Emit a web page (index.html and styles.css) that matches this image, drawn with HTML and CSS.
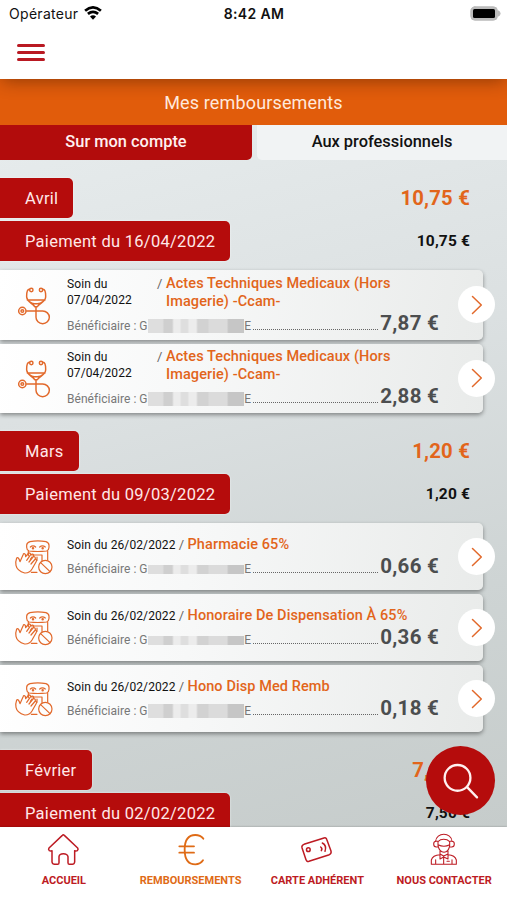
FILE: index.html
```html
<!DOCTYPE html>
<html lang="fr">
<head>
<meta charset="utf-8">
<meta name="viewport" content="width=device-width, initial-scale=1">
<title>Mes remboursements</title>
<link rel="stylesheet" href="styles.css">
</head>
<body>
<svg class="sprite" aria-hidden="true">
  <symbol id="stethoscope" viewBox="42 352 120 132">
    <circle cx="94" cy="373" r="5"/><circle cx="123" cy="373" r="5"/>
    <path d="M88 371C79 372 80 384 80 394C81 410 97 411 104 423H112C120 411 136 410 137 394C137 384 138 372 129 371M82 403H135M87 407Q98 415 104 414H112Q121 414 130 407M108 423V455A20 19 0 1 0 128 436H80"/>
    <circle cx="67" cy="436" r="11"/><circle cx="67" cy="436" r="4"/>
  </symbol>
  <symbol id="pharmacy" viewBox="42 65 120 120">
    <path d="M80 90Q80 82 90 79Q113 74 138 79Q147 82 147 90V96Q147 104 140 107Q113 110 87 107Q80 104 80 96Z"/>
    <path d="M91 95Q99 88 107 95M119 95Q127 88 136 95M85 108V121M143 108V134M95 119H126V136M111 125V135M91 132L96 125"/>
    <circle cx="99" cy="99" r="2"/><circle cx="128" cy="99" r="2"/>
    <path d="M74 173Q51 166 48 150Q46 139 50 128Q56 124 60 139L69 119Q71 112 76 117L77 124L86 113Q91 112 92 118L80 135M92 118L98 116Q103 119 100 124L87 140M100 124Q107 123 106 131L93 146M106 131Q112 133 108 140L96 161Q88 174 74 173M111 171H94"/>
    <circle cx="136" cy="155" r="20"/><path d="M122 142L150 169"/>
  </symbol>
  <symbol id="chevron" viewBox="0 0 12 20"><path d="M1.5 1.5L10.3 10L1.5 18.5"/></symbol>
</svg>
<div class="app">
  <header class="top">
    <div class="status">
      <div class="carrier"><span>Opérateur</span>
        <svg class="wifi" viewBox="0 0 18 14"><path d="M1.1 4.8Q9 -2 16.9 4.8M3.9 7.9Q9 3.7 14.1 7.9"/><path class="solid" d="M6 10.6Q9 8.1 12 10.6L9 13.8Z"/></svg>
      </div>
      <span class="clock">8:42 AM</span>
      <svg class="battery" viewBox="0 0 31 15"><rect x=".8" y=".8" width="26.6" height="13.4" rx="4"/><path d="M28.8 5Q31.6 7.5 28.8 10Z"/><rect class="charge" x="3" y="3" width="22" height="9" rx="1.5"/></svg>
    </div>
    <div class="menu"><i></i><i></i><i></i></div>
  </header>
  <main class="content">
    <h1 class="title">Mes remboursements</h1>
    <div class="tabs"><div class="tab active">Sur mon compte</div><div class="tab">Aux professionnels</div></div>

    <section class="month">
      <div class="line"><span class="tag">Avril</span><b class="month-total">10,75 €</b></div>
      <div class="line"><span class="tag">Paiement du 16/04/2022</span><b class="pay-total">10,75 €</b></div>
      <div class="cards">
        <article class="card tall">
          <svg class="icon"><use href="#stethoscope"/></svg>
          <div class="body">
            <div class="care"><span class="date">Soin du 07/04/2022</span><span class="slash">/</span><span class="act">Actes Techniques Medicaux (Hors Imagerie) -Ccam-</span></div>
            <div class="who"><span class="name">Bénéficiaire : G<i class="mask"></i>E</span><i class="dots"></i><b>7,87 €</b></div>
          </div>
          <div class="go"><svg><use href="#chevron"/></svg></div>
        </article>
        <article class="card tall">
          <svg class="icon"><use href="#stethoscope"/></svg>
          <div class="body">
            <div class="care"><span class="date">Soin du 07/04/2022</span><span class="slash">/</span><span class="act">Actes Techniques Medicaux (Hors Imagerie) -Ccam-</span></div>
            <div class="who"><span class="name">Bénéficiaire : G<i class="mask"></i>E</span><i class="dots"></i><b>2,88 €</b></div>
          </div>
          <div class="go"><svg><use href="#chevron"/></svg></div>
        </article>
      </div>
    </section>

    <section class="month">
      <div class="line"><span class="tag">Mars</span><b class="month-total">1,20 €</b></div>
      <div class="line"><span class="tag">Paiement du 09/03/2022</span><b class="pay-total">1,20 €</b></div>
      <div class="cards">
        <article class="card">
          <svg class="icon"><use href="#pharmacy"/></svg>
          <div class="body">
            <div class="care"><span class="date">Soin du 26/02/2022</span><span class="slash">/</span><span class="act">Pharmacie 65%</span></div>
            <div class="who"><span class="name">Bénéficiaire : G<i class="mask short"></i>E</span><i class="dots"></i><b>0,66 €</b></div>
          </div>
          <div class="go"><svg><use href="#chevron"/></svg></div>
        </article>
        <article class="card">
          <svg class="icon"><use href="#pharmacy"/></svg>
          <div class="body">
            <div class="care"><span class="date">Soin du 26/02/2022</span><span class="slash">/</span><span class="act">Honoraire De Dispensation À 65%</span></div>
            <div class="who"><span class="name">Bénéficiaire : G<i class="mask short"></i>E</span><i class="dots"></i><b>0,36 €</b></div>
          </div>
          <div class="go"><svg><use href="#chevron"/></svg></div>
        </article>
        <article class="card">
          <svg class="icon"><use href="#pharmacy"/></svg>
          <div class="body">
            <div class="care"><span class="date">Soin du 26/02/2022</span><span class="slash">/</span><span class="act">Hono Disp Med Remb</span></div>
            <div class="who"><span class="name">Bénéficiaire : G<i class="mask"></i>E</span><i class="dots"></i><b>0,18 €</b></div>
          </div>
          <div class="go"><svg><use href="#chevron"/></svg></div>
        </article>
      </div>
    </section>

    <section class="month">
      <div class="line"><span class="tag">Février</span><b class="month-total">7,50 €</b></div>
      <div class="line"><span class="tag">Paiement du 02/02/2022</span><b class="pay-total">7,50 €</b></div>
    </section>
  </main>
  <nav class="nav">
    <div class="item"><svg viewBox="140 305 105 105"><path d="M189 315Q192 312 195 315L235 353Q238 357 234 361Q230 363 226 361V395Q225 402 219 402H210Q206 402 206 397V379Q204 370 192 370Q180 370 179 379V397Q179 402 175 402H166Q159 402 158 395V361Q154 363 150 361Q146 357 149 353Z"/></svg><span>ACCUEIL</span></div>
    <div class="item current"><svg class="euro" viewBox="519 305 105 105"><path d="M610 325Q601 314 586 314C562 314 554 333 554 358C554 384 562 402 586 402Q601 402 609 390M538 348H582M538 367H582"/></svg><span>REMBOURSEMENTS</span></div>
    <div class="item"><svg viewBox="143 305 105 105"><path d="M155 342L215 323Q221 321 223 327L236 362Q238 370 231 373L170 393Q163 395 161 388L149 352Q147 345 155 342ZM205 350Q211 354 207 361M210 338Q224 345 218 363"/><circle cx="168" cy="358" r="5.5"/></svg><span>CARTE ADHÉRENT</span></div>
    <div class="item"><svg class="agent" viewBox="523 305 105 105"><path d="M549 333C550 305 597 305 598 333M556 334C562 328 570 327 573 327C577 327 585 328 591 334V346Q588 365 574 366Q560 365 556 346ZM556 343Q574 352 591 343M555 333H551Q543 333 543 341Q543 350 551 350H556M592 333H597Q605 333 605 341Q605 350 597 350H592M562 362V373Q540 374 536 389V402H611V389Q607 374 586 373V362M562 371L573 377L586 371V386L573 380L562 386ZM573 381V402M549 388V402M598 388V402M583 393H590"/></svg><span>NOUS CONTACTER</span></div>
  </nav>
  <div class="search"><svg viewBox="565 92 115 115"><circle cx="612" cy="140" r="39"/><path d="M641 168L671 199"/></svg></div>
</div>
</body>
</html>
```
FILE: styles.css
```css
* { box-sizing: border-box; }
body { margin: 0; font-family: Roboto, "Liberation Sans", sans-serif; color: #111; }
i { font-style: normal; }
svg { fill: none; stroke: currentColor; stroke-linecap: round; stroke-linejoin: round; }
.sprite { display: none; }
.app { position: relative; width: 507px; height: 900px; display: flex; flex-direction: column; overflow: hidden; background: #fff; }

.top { height: 79px; flex: none; z-index: 2; background: #fff; box-shadow: 0 4px 16px -2px rgba(50, 20, 0, .45); clip-path: inset(0 0 -26px 0); }
.status { height: 28px; padding: 0 6px 0 9px; display: grid; grid-template-columns: 1fr auto 1fr; align-items: center; font-family: Inter, sans-serif; font-size: 14px; }
.carrier { display: flex; align-items: center; gap: 6px; letter-spacing: .3px; margin-top: -2px; }
.wifi { width: 18px; height: 14px; stroke-width: 2.7; stroke-linecap: butt; color: #000; }
.wifi .solid { fill: #000; stroke: none; }
.clock { font-weight: 600; letter-spacing: .35px; margin: -2px 2px 0 0; }
.battery { justify-self: end; width: 31px; height: 15px; margin-top: -2px; fill: #bbb; stroke: #bbb; stroke-width: 1; }
.battery .charge { fill: #000; stroke: none; }
.menu { width: 28px; margin: 16px 0 0 17px; display: grid; gap: 4.6px; }
.menu i { height: 2.6px; border-radius: 2px; background: #b91922; }

.content { flex: 1; min-height: 0; overflow: hidden; background: linear-gradient(165deg, #e6ebec 8%, #dbe0e1 42%, #ced4d4 72%, #c6cccb 100%); }
.title { margin: 0; height: 46px; display: flex; align-items: center; justify-content: center; background: #e15c0b; color: #ffe9dc; font-size: 18px; font-weight: 400; letter-spacing: .15px; }
.tabs { display: flex; gap: 5px; height: 35px; font-size: 16.4px; font-weight: 500; }
.tab { flex: 1; display: flex; align-items: center; justify-content: center; background: #f1f3f4; border-radius: 0 0 0 5px; padding-bottom: 2px; }
.tab.active { flex: none; width: 252px; background: #b20c0c; color: #fff0f0; border-radius: 0 0 5px 0; }

.month { padding-top: 18px; }
.line { display: flex; justify-content: space-between; align-items: center; height: 40px; margin-bottom: 3px; padding-right: 37px; }
.tag { height: 40px; padding: 0 15px 0 25px; display: flex; align-items: center; border-radius: 0 5px 5px 0; background: #b50c0c; color: #ffe8e8; font-size: 16.5px; letter-spacing: .28px; box-shadow: 0 0 2px rgba(255, 255, 255, .8); }
.month-total { font-size: 20.3px; color: #e2651b; letter-spacing: .2px; }
.pay-total { font-size: 15.5px; letter-spacing: .15px; }

.cards { display: grid; grid-template-columns: 482.5px; gap: 4px; padding-top: 6px; }
.card { height: 67px; display: flex; align-items: center; background: linear-gradient(100deg, #fff, #f7f8f8 40%, #e9ebea); border-radius: 0 5px 5px 0; box-shadow: 0 2px 4px rgba(0, 0, 0, .4); }
.card.tall { height: 69.5px; }
.icon { width: 40px; height: 40px; margin-left: 14px; flex: none; color: #e2692b; stroke-width: 3.6; }
.tall .icon { width: 40px; height: 44px; stroke-width: 4.4; }
.body { width: 372px; margin-left: 13px; flex: none; align-self: stretch; display: flex; flex-direction: column; justify-content: space-between; padding: 13px 0 13px; }
.tall .body { padding: 4.5px 0 6px; }
.care { display: flex; line-height: 18px; }
.date { font-size: 12px; letter-spacing: .1px; white-space: nowrap; }
.tall .date { width: 90px; line-height: 16px; white-space: normal; padding-right: 20px; padding-top: 1px; }
.slash { color: #666; font-size: 13px; width: 12px; text-align: center; flex: none; }
.tall .slash { width: 9px; text-align: left; }
.act { font-size: 14.5px; font-weight: 500; color: #e2651b; letter-spacing: .09px; white-space: nowrap; }
.tall .act { white-space: normal; width: 240px; }
.who { display: flex; align-items: baseline; height: 22px; line-height: 22px; }
.name { color: #777; font-size: 12px; letter-spacing: .04px; width: 184px; display: flex; align-items: center; white-space: nowrap; }
.mask { flex: 1; height: 14px; background: linear-gradient(90deg, #dedede 0 15%, #cfcfcf 17% 25%, #ececec 27% 33%, #dedede 35% 41%, #ececec 43% 50%, #d2d2d2 52% 62%, #dbdbdb 64% 82%, #c6c6c6 84%); }
.mask.short { height: 9px; }
.dots { flex: 1; margin: 0 2px; border-bottom: 1px dotted #666; }
.who b { font-size: 20.5px; color: #4c4e4f; letter-spacing: .25px; }
.go { width: 37px; height: 37px; margin: 0 -13px 0 19px; flex: none; display: grid; place-items: center; border-radius: 50%; background: #fff; color: #e2692b; }
.go svg { width: 12px; height: 20px; stroke-width: 1.5; }

.nav { height: 73px; flex: none; display: grid; grid-template-columns: repeat(4, 1fr); background: #fff; color: #bd1b23; box-shadow: 0 0 2px rgba(0, 0, 0, .3); z-index: 1; }
.item { display: flex; flex-direction: column; align-items: center; padding: 5px 0 0 1px; font-size: 11px; font-weight: 700; white-space: nowrap; }
.item svg { width: 35px; height: 35px; stroke-width: 4.5; }
.item .euro { stroke-width: 5.5; }
.item .agent { stroke-width: 3.2; }
.item span { margin-top: 7px; line-height: 13px; }
.current { color: #df6b16; }
.search { position: absolute; z-index: 3; left: 426px; top: 746px; width: 69px; height: 69px; border-radius: 50%; display: grid; place-items: center; background: #b50c0c; color: #fff0f0; }
.search svg { width: 38px; height: 38px; stroke-width: 7; }
```
